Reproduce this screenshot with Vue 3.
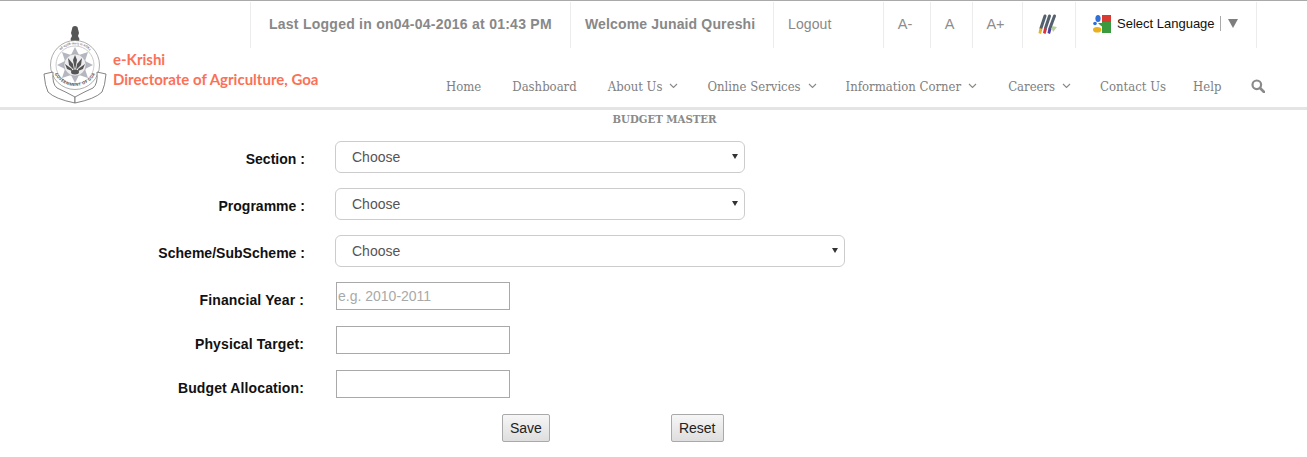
<template>
  <div class="page">
    <header class="header">
      <div class="brand">
        <svg class="emblem" width="66" height="80" viewBox="0 0 66 80">
          <defs>
            <path id="ringTop" d="M12.500 39 A20.500 20.500 0 0 1 53.500 39" />
            <path id="ringBottom" d="M10 37 A23 23 0 0 0 56 37" />
          </defs>
          <g fill="#555">
            <path d="M30.500 1 Q33 -1 35.500 1 L37 7 L36 10 L37.500 13 L36.500 16 L29.500 16 L28.500 13 L30 10 L29 7 Z" />
            <rect x="28.500" y="15" width="9" height="2.500" />
          </g>
          <circle cx="33" cy="39" r="24.500" fill="#fff" stroke="#777" stroke-width="0.6" />
          <circle cx="33" cy="39" r="19" fill="none" stroke="#999" stroke-width="0.5" />
          <text class="ring-text"><textPath href="#ringTop" startOffset="50%" text-anchor="middle">सर्वे भद्राणि पश्यन्तु मा कश्चित्</textPath></text>
          <polygon points="33,21 37,29 46,26 43,35 51,39 43,43 46,52 37,49 33,57 29,49 20,52 23,43 15,39 23,35 20,26 29,29" fill="#b4b7c0" />
          <circle cx="33" cy="39" r="11" fill="#eeeef1" stroke="#999" stroke-width="0.5" />
          <g fill="#555">
            <path d="M33 29 L35 34 L33 44 L31 34 Z" />
            <path d="M26 32 L31 38 L32 44 L27 39 Z" />
            <path d="M40 32 L35 38 L34 44 L39 39 Z" />
            <path d="M23 38 L30 43 L30 45 L25 43 Z" />
            <path d="M43 38 L36 43 L36 45 L41 43 Z" />
            <ellipse cx="33" cy="46" rx="4" ry="2.500" />
          </g>
          <g fill="#fff" stroke="#666" stroke-width="0.8" stroke-linejoin="round">
            <path d="M2 48 L11 46 Q10 58 15 62 Q24 66 33 71 L33 77 Q13 73 6 66 Q3 60 2 48 Z" />
            <path d="M64 48 L55 46 Q56 58 51 62 Q42 66 33 71 L33 77 Q53 73 60 66 Q63 60 64 48 Z" />
          </g>
          <text class="ring-text gov"><textPath href="#ringBottom" startOffset="50%" text-anchor="middle">GOVERNMENT OF GOA</textPath></text>
        </svg>
        <div class="brand-text">
          <div>e-Krishi</div>
          <div>Directorate of Agriculture, Goa</div>
        </div>
      </div>
      <div class="header-right">
        <div class="topbar">
          <div class="cell bold last-login">Last Logged in on04-04-2016 at 01:43 PM</div>
          <div class="cell bold welcome">Welcome Junaid Qureshi</div>
          <div class="cell logout">Logout</div>
          <div class="cell size s1">A-</div>
          <div class="cell size s2">A</div>
          <div class="cell size s3">A+</div>
          <div class="cell pens">
            <svg width="20" height="20" viewBox="0 0 20 20">
              <path d="M13 12 L19 13 L15 18 Z" fill="#b5d09a" />
              <g stroke="#55606f" stroke-width="3" stroke-linecap="round">
                <line x1="7" y1="2" x2="3" y2="14" />
                <line x1="11.500" y1="2" x2="7.500" y2="14" />
                <line x1="16.500" y1="2" x2="12" y2="14" />
              </g>
              <polygon points="1.500,14 4.500,15 3,20 0.500,19" fill="#e3b22e" />
              <polygon points="6,14 9,15 7.500,20 5,19" fill="#d8343a" />
              <polygon points="10.500,14 13.500,15 12,20 9.500,19" fill="#4b3fa3" />
            </svg>
          </div>
          <div class="cell lang">
            <svg width="18" height="18" viewBox="0 0 18 18">
              <rect x="9" y="5" width="9" height="13" fill="#3a9a3d" />
              <path d="M5 8 L9 8 L9 18 L11 18 Q11 12 7 10 Z" fill="#3a9a3d" />
              <rect x="9" y="0" width="9" height="7" fill="#d93a32" />
              <ellipse cx="5" cy="3.500" rx="2.600" ry="3.500" fill="#2f6fd6" />
              <circle cx="2" cy="8.500" r="1.800" fill="#2f6fd6" />
              <ellipse cx="4.200" cy="14.700" rx="4.200" ry="2.800" fill="#eab020" />
            </svg>
            <span class="lang-label">Select Language</span>
            <span class="lang-sep"></span>
            <span class="lang-arrow"></span>
          </div>
        </div>
        <nav class="nav">
          <span v-for="item in navItems" :key="item.label" class="nav-item">
            {{ item.label }}
            <svg v-if="item.menu" class="chev" width="9" height="6" viewBox="0 0 9 6">
              <path d="M1 1 L4.500 4.500 L8 1" fill="none" stroke="#888" stroke-width="1.100" />
            </svg>
          </span>
          <svg class="search" width="14" height="14" viewBox="0 0 14 14">
            <circle cx="5.800" cy="5.800" r="4.300" fill="none" stroke="#8a8a8a" stroke-width="2.200" />
            <line x1="9" y1="9" x2="13" y2="13" stroke="#8a8a8a" stroke-width="2.600" stroke-linecap="round" />
          </svg>
        </nav>
      </div>
    </header>

    <h1 class="title">BUDGET MASTER</h1>

    <form class="form" @submit.prevent>
      <div v-for="row in selectRows" :key="row.label" class="row select-row">
        <label class="label">{{ row.label }}</label>
        <div class="select-wrap" :class="row.size">
          <select class="select"><option>Choose</option></select>
        </div>
      </div>
      <div v-for="row in inputRows" :key="row.label" class="row input-row">
        <label class="label">{{ row.label }}</label>
        <input class="input" type="text" :placeholder="row.placeholder" />
      </div>
      <div class="buttons">
        <button class="btn" type="button">Save</button>
        <button class="btn" type="button">Reset</button>
      </div>
    </form>
  </div>
</template>

<script setup>
const navItems = [
  { label: 'Home' },
  { label: 'Dashboard' },
  { label: 'About Us', menu: true },
  { label: 'Online Services', menu: true },
  { label: 'Information Corner', menu: true },
  { label: 'Careers', menu: true },
  { label: 'Contact Us' },
  { label: 'Help' },
]

const selectRows = [
  { label: 'Section :', size: 'short' },
  { label: 'Programme :', size: 'short' },
  { label: 'Scheme/SubScheme :', size: 'long' },
]

const inputRows = [
  { label: 'Financial Year :', placeholder: 'e.g. 2010-2011' },
  { label: 'Physical Target:', placeholder: '' },
  { label: 'Budget Allocation:', placeholder: '' },
]
</script>

<style>
html, body {
  margin: 0;
  background: #fff;
}
</style>

<style scoped>
.page {
  width: 1307px;
  height: 457px;
  overflow: hidden;
  font-family: "Liberation Sans", Arial, sans-serif;
}
.header {
  display: flex;
  height: 106px;
  border-top: 1px solid #a9a9a9;
  border-bottom: 3px solid #e4e4e4;
  box-sizing: content-box;
}
.brand {
  width: 250px;
  flex-shrink: 0;
  display: flex;
  padding: 25px 0 0 42px;
  box-sizing: border-box;
}
.emblem {
  flex-shrink: 0;
}
.ring-text {
  font-family: "Noto Sans", sans-serif;
  font-size: 3px;
  fill: #555;
}
.gov {
  font-size: 4px;
  font-weight: 700;
  letter-spacing: 0.3px;
}
.brand-text {
  margin: 23px 0 0 5px;
  white-space: nowrap;
  font-family: Lato, "Open Sans", sans-serif;
  font-size: 15px;
  font-weight: 700;
  line-height: 20px;
  color: #fb7157;
}
.header-right {
  flex: 1;
  min-width: 0;
}
.topbar {
  display: flex;
  height: 46px;
  margin-top: 1px;
}
.cell {
  box-sizing: border-box;
  border-left: 1px solid #ececec;
  height: 46px;
  display: flex;
  align-items: center;
  padding-bottom: 3px;
  font-size: 14px;
  color: #888;
  white-space: nowrap;
}
.bold {
  font-weight: 700;
}
.last-login {
  width: 320px;
  padding-left: 18px;
  letter-spacing: 0.25px;
}
.welcome {
  width: 203px;
  padding-left: 14px;
  letter-spacing: 0.15px;
}
.logout {
  width: 110px;
  padding-left: 14px;
  letter-spacing: 0.1px;
}
.size {
  justify-content: center;
  padding-right: 4px;
  font-size: 14.500px;
  color: #8d8d8d;
}
.s1 { width: 47px; }
.s2 { width: 42px; }
.s3 { width: 50px; }
.pens {
  width: 53px;
  padding-left: 15px;
}
.lang {
  width: 182px;
  padding-left: 17px;
  border-right: 1px solid #ececec;
  color: #111;
  font-size: 13px;
}
.lang-label {
  margin-left: 6px;
}
.lang-sep {
  width: 1px;
  height: 15px;
  margin-left: 5px;
  background: #aaa;
}
.lang-arrow {
  width: 0;
  height: 0;
  margin-left: 7px;
  border-left: 5px solid transparent;
  border-right: 5px solid transparent;
  border-top: 9px solid #7e7e7e;
}
.nav {
  display: flex;
  align-items: center;
  gap: 30px;
  margin-top: 26px;
  padding-left: 196px;
  height: 24px;
  font-family: "DejaVu Serif Condensed", "Liberation Serif", serif;
  font-size: 13px;
  color: #808080;
  white-space: nowrap;
}
.nav-item {
  display: inline-flex;
  align-items: center;
}
.nav-item:nth-child(1),
.nav-item:nth-child(2),
.nav-item:nth-child(5) {
  margin-right: 1px;
}
.nav-item:nth-child(3),
.nav-item:nth-child(4),
.nav-item:nth-child(6) {
  margin-right: -1px;
}
.nav-item:nth-child(7) {
  margin-right: -3px;
}
.chev {
  margin-left: 7px;
}
.search {
  margin-bottom: 1px;
}
.title {
  margin: 1px 0 0;
  padding-left: 22px;
  height: 20px;
  font-family: "DejaVu Serif Condensed", "Liberation Serif", serif;
  font-size: 11.300px;
  line-height: 16px;
  font-weight: 700;
  text-align: center;
  color: #8a8a8a;
}
.form {
  margin-top: 10px;
}
.row {
  display: flex;
  align-items: center;
}
.select-row {
  height: 32px;
  margin-bottom: 15px;
}
.input-row {
  height: 28px;
  margin-bottom: 16px;
}
.label {
  box-sizing: border-box;
  width: 305px;
  padding-top: 4px;
  text-align: right;
  font-size: 14px;
  font-weight: 700;
  color: #111;
}
.select-row .label {
  padding-top: 3px;
  letter-spacing: 0.02px;
}
.input-row .label {
  width: 304px;
  padding-top: 7px;
  letter-spacing: 0.12px;
}
.select-wrap {
  position: relative;
  height: 32px;
  margin-left: 30px;
}
/* small native-looking arrow over the select */
.select-wrap::after {
  content: "";
  position: absolute;
  top: 13px;
  right: 7px;
  border-left: 3px solid transparent;
  border-right: 3px solid transparent;
  border-top: 5px solid #333;
  pointer-events: none;
}
.select {
  box-sizing: border-box;
  display: block;
  width: 100%;
  height: 32px;
  padding: 0 16px;
  border: 1px solid #ccc;
  border-radius: 6px;
  background: #fff;
  appearance: none;
  font-family: "Liberation Sans", Arial, sans-serif;
  font-size: 14px;
  color: #555;
}
.short { width: 410px; }
.long { width: 510px; }
.input {
  box-sizing: border-box;
  width: 174px;
  height: 28px;
  margin-left: 32px;
  padding: 0 1px;
  border: 1px solid #a9a9a9;
  background: #fff;
  font-family: "Liberation Sans", Arial, sans-serif;
  font-size: 14px;
}
.input::placeholder {
  color: #a9a9a9;
  opacity: 1;
}
.buttons {
  display: flex;
  gap: 121px;
  padding-left: 502px;
}
.btn {
  box-sizing: border-box;
  height: 28px;
  padding: 0 7px;
  border: 1px solid #a9a9a9;
  border-radius: 2px;
  background: linear-gradient(#f6f6f6, #dedede);
  font-family: "Liberation Sans", Arial, sans-serif;
  font-size: 14px;
  color: #222;
}
</style>
